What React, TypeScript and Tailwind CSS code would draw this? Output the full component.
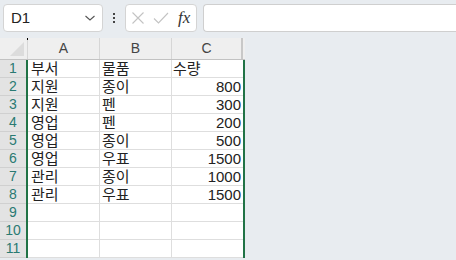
import React from "react";

const rows: [string, string, string][] = [
  ["부서", "물품", "수량"],
  ["지원", "종이", "800"],
  ["지원", "펜", "300"],
  ["영업", "펜", "200"],
  ["영업", "종이", "500"],
  ["영업", "우표", "1500"],
  ["관리", "종이", "1000"],
  ["관리", "우표", "1500"],
  ["", "", ""],
  ["", "", ""],
  ["", "", ""],
];

const font = {
  fontFamily: '"Liberation Sans", "Noto Sans CJK KR", sans-serif',
};

const App = () => {
  return (
    <div
      className="flex h-[260px] w-[456px] flex-col overflow-hidden bg-[#e8ecf0] text-[#222]"
      style={font}
    >
      {/* formula bar */}
      <div className="flex h-[38px] shrink-0 items-start pt-[4px]">
        <div className="ml-[3px] flex h-[28px] w-[100px] items-center justify-between rounded-[4px] border border-[#d4d4d4] bg-white pl-[7px] pr-[6px]">
          <span className="text-[15px] text-[#222]">D1</span>
          <svg width="12" height="8" viewBox="0 0 12 8" fill="none">
            <path d="M1.5 2l4.5 4 4.5-4" stroke="#555" strokeWidth="1.1" />
          </svg>
        </div>
        <div className="flex h-[28px] w-[22px] flex-col items-center justify-center gap-[2px]">
          <span className="h-[2px] w-[2px] bg-[#444]" />
          <span className="h-[2px] w-[2px] bg-[#444]" />
          <span className="h-[2px] w-[2px] bg-[#444]" />
        </div>
        <div className="flex h-[28px] w-[72px] items-center rounded-[4px] border border-[#d4d4d4] bg-white pl-[5px]">
          <svg width="14" height="14" viewBox="0 0 14 14" fill="none">
            <path d="M1.5 1.5l11 11M12.5 1.5l-11 11" stroke="#c3c3c3" strokeWidth="1.1" />
          </svg>
          <svg className="ml-[8px]" width="16" height="14" viewBox="0 0 16 14" fill="none">
            <path d="M1 7.5l4.5 4.5L15 2" stroke="#c3c3c3" strokeWidth="1.1" />
          </svg>
          <span
            className="ml-[9px] text-[17px] italic text-[#333]"
            style={{ fontFamily: '"Liberation Serif", serif' }}
          >
            fx
          </span>
        </div>
        <div className="ml-[6px] h-[28px] flex-1 rounded-l-[4px] border-y border-l border-[#cfcfcf] bg-white" />
      </div>

      {/* sheet */}
      <div className="flex flex-1">
        <div className="flex w-[245px] flex-col">
          {/* column header */}
          <div className="flex h-[22px] border-b border-[#c2c2c2] bg-[#efefef] text-[14px] text-[#444]">
            <div className="relative w-[28px] border-r border-[#d6d6d6]">
              <svg className="absolute bottom-[3px] right-[3px]" width="14" height="14" viewBox="0 0 14 14">
                <path d="M14 0L14 14L0 14Z" fill="#dcdcdc" />
              </svg>
              <span className="absolute left-[27px] top-0 h-[2px] w-[1px] bg-black" />
            </div>
            <div className="flex w-[72px] items-center justify-center border-r border-[#d6d6d6]">A</div>
            <div className="flex w-[72px] items-center justify-center border-r border-[#d6d6d6]">B</div>
            <div className="flex w-[71px] items-center justify-center border-r-2 border-[#c8c8c8]">C</div>
          </div>

          {rows.map((r, i) => (
            <div key={i} className="flex h-[18px] text-[15px] leading-[17px]">
              <div className="flex w-[26px] items-center justify-center border-b border-[#d0d0d0] bg-[#e3e3e3] text-[14px] text-[#2a7a72]">
                {i + 1}
              </div>
              <div className="w-[2px] bg-[#217346]" />
              <div className="w-[72px] truncate border-b border-r border-[#dedede] bg-white pl-[3px]">
                {r[0]}
              </div>
              <div className="w-[72px] truncate border-b border-r border-[#dedede] bg-white pl-[2px]">
                {r[1]}
              </div>
              <div className="w-[71px] truncate border-b border-[#dedede] bg-white pr-[2px] text-right">
                {i === 0 ? <span className="float-left pl-[1px]">{r[2]}</span> : r[2]}
              </div>
              <div className="w-[2px] bg-[#217346]" />
            </div>
          ))}
        </div>
        <div className="flex-1" />
      </div>
    </div>
  );
};

export default App;
